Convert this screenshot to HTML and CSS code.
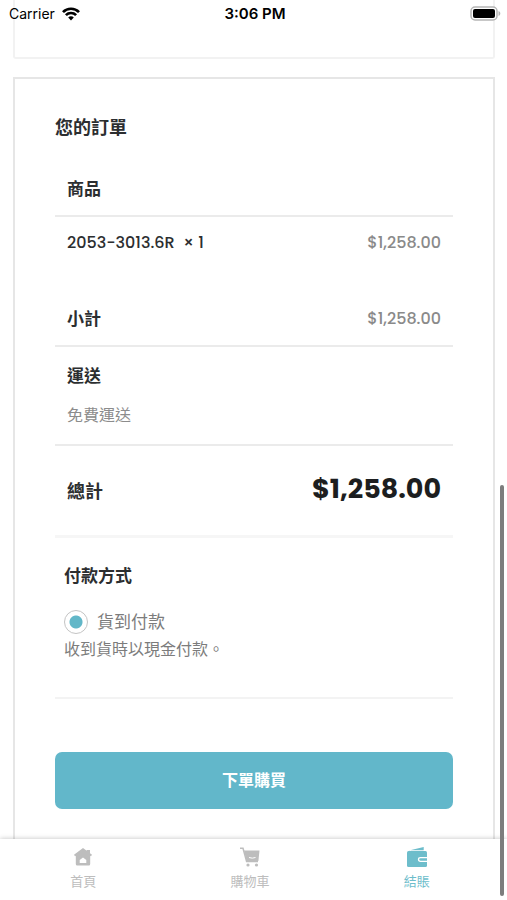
FILE: index.html
```html
<!DOCTYPE html>
<html lang="zh-Hant">
<head>
<meta charset="utf-8">
<meta name="viewport" content="width=device-width, initial-scale=1">
<title>結賬</title>
<link rel="stylesheet" href="styles.css">
</head>
<body>
<header class="status">
  <div class="carrier">
    <span>Carrier</span>
    <svg width="18" height="14" viewBox="0 0 18 14" aria-hidden="true">
      <g fill="none" stroke="#000" stroke-width="2.7">
        <path d="M1 5.1C5.4.6 12.6.6 17 5.1"/>
        <path d="M3.9 8.1c2.8-2.8 7.4-2.8 10.2 0"/>
      </g>
      <path d="M6.2 10.4c1.6-1.5 4-1.5 5.6 0L9 13.4z"/>
    </svg>
  </div>
  <span class="time">3:06 PM</span>
  <svg class="battery" width="31" height="15" viewBox="0 0 31 15" aria-hidden="true">
    <rect x="1" y="1" width="26" height="13" rx="4" fill="#fff" stroke="#b5b5b5" stroke-width="1.5"/>
    <rect x="3" y="3" width="22" height="9" rx="2"/>
    <path d="M28.5 5c2.4 1 2.4 4 0 5z" fill="#b5b5b5"/>
  </svg>
</header>

<section class="previous" aria-hidden="true"></section>

<main class="order">
  <h1 class="order-title">您的訂單</h1>
  <table class="items">
    <thead>
      <tr class="head"><th colspan="2" scope="col">商品</th></tr>
    </thead>
    <tbody>
      <tr class="item"><td class="name">2053-3013.6R &nbsp;× 1</td><td class="price">$1,258.00</td></tr>
      <tr class="subtotal"><th scope="row">小計</th><td class="price">$1,258.00</td></tr>
      <tr class="shipping"><td colspan="2"><div class="shipping-box"><strong>運送</strong><span>免費運送</span></div></td></tr>
      <tr class="total"><th scope="row">總計</th><td class="price">$1,258.00</td></tr>
    </tbody>
  </table>
  <form class="payment">
    <h2 class="payment-title">付款方式</h2>
    <div class="method">
      <input type="radio" id="cod" name="payment" checked>
      <label for="cod">貨到付款</label>
    </div>
    <p class="note">收到貨時以現金付款。</p>
  </form>
  <button class="buy" type="button">下單購買</button>
</main>

<nav class="tabs">
  <a class="tab" href="#home">
    <svg width="20" height="20" viewBox="0 0 20 20" aria-hidden="true">
      <path fill="currentColor" fill-rule="evenodd" d="M10 1l3.7 2.7V3H17v3.2l2 1.5-1 1.6-.8-.5V17q0 1.5-1.5 1.5H4.3q-1.5 0-1.5-1.5V8.8l-.8.5-1-1.6zM10 10.5L6.7 13v3h6.6v-3z"/>
    </svg>
    <span>首頁</span>
  </a>
  <a class="tab" href="#cart">
    <svg width="20" height="20" viewBox="0 0 20 20" aria-hidden="true">
      <path d="M0 1.2h3L6.6 14.5H18" fill="none" stroke="currentColor" stroke-width="1.5"/>
      <path fill="currentColor" d="M4 3.5h15.5L18.4 14H6.5z"/>
      <path d="M9 10.5q3.3 1.3 6.5 0" fill="none" stroke="#fff"/>
      <circle cx="8" cy="18" r="1.6" fill="currentColor"/>
      <circle cx="16.5" cy="18" r="1.6" fill="currentColor"/>
    </svg>
    <span>購物車</span>
  </a>
  <a class="tab active" href="#checkout" aria-current="page">
    <svg width="20" height="20" viewBox="0 0 20 20" aria-hidden="true">
      <path fill="currentColor" d="M2 3.6L16.7 0v3.2H2z"/>
      <rect y="4" width="20" height="16" rx="1.5" fill="currentColor"/>
      <path d="M20 10.7h-6.5q-2 0-2 1.8t2 1.8H20" fill="none" stroke="#fff" stroke-width="1.3"/>
    </svg>
    <span>結賬</span>
  </a>
</nav>
<div class="scroll-thumb" aria-hidden="true"></div>
</body>
</html>
```

FILE: styles.css
```css
* {
  box-sizing: border-box;
}

body {
  margin: 0;
  min-height: 100vh;
  display: flex;
  flex-direction: column;
  background: #fff;
  color: #2c2e30;
  font-family: Poppins, Inter, "Noto Sans CJK TC", sans-serif;
  font-size: 16px;
  line-height: 24px;
}

.status {
  position: absolute;
  top: 0;
  left: 0;
  right: 0;
  display: grid;
  grid-template-columns: 1fr auto 1fr;
  align-items: center;
  height: 27px;
  padding: 0 6px 0 9px;
  color: #000;
  font-family: Inter, sans-serif;
  font-size: 14px;
}

.carrier {
  display: flex;
  align-items: center;
  gap: 7px;
}

.time {
  font-size: 15px;
  font-weight: 600;
}

.battery {
  justify-self: end;
}

.previous {
  height: 59px;
  margin: 0 12px 18px 13px;
  border: 2px solid #f2f2f2;
  border-top: 0;
  border-radius: 0 0 3px 3px;
}

.order {
  flex: 1;
  margin: 0 12px 0 13px;
  padding: 33px 40px 30px;
  border: 2px solid #e6e6e6;
  border-bottom: 0;
}

.order-title {
  margin: 0 0 17px;
  font-size: 18px;
  font-weight: 600;
  line-height: 32px;
}

.items {
  width: 100%;
  border-collapse: separate;
  border-spacing: 0;
}

.items th,
.items td {
  padding: 2px 12px 0;
  border-bottom: 2px solid #ebebeb;
  text-align: left;
}

.items th {
  height: 56px;
  font-size: 17px;
  font-weight: 600;
}

.items .price {
  color: #8a8a8a;
  font-weight: 500;
  text-align: right;
}

.items .item td {
  height: 74px;
  padding-top: 1px;
  border: 0;
  line-height: 50px;
  vertical-align: top;
}

.item .name {
  font-weight: 500;
}

.items .shipping td {
  padding-top: 0;
}

.shipping-box {
  display: flex;
  flex-direction: column;
  gap: 16px;
  padding: 17px 0 16px;
  color: #8c8c8c;
}

.shipping-box strong {
  color: #2c2e30;
  font-size: 17px;
  font-weight: 600;
}

.items .total th,
.items .total td {
  height: 92px;
  border-bottom: 3px solid #f6f6f6;
}

.items .total th {
  font-size: 18px;
}

.items .total .price {
  padding-top: 0;
  padding-bottom: 4px;
  color: #1c1e20;
  font-size: 27px;
  font-weight: 700;
}

.payment {
  padding: 26px 9px 35px;
  border-bottom: 2px solid #f3f3f3;
  color: #7c7c7c;
}

.payment-title {
  margin: 0 0 22px;
  color: #2c2e30;
  font-size: 17px;
  font-weight: 600;
  line-height: 24px;
}

.method {
  display: flex;
  align-items: center;
  gap: 9px;
  font-size: 17px;
}

.method input {
  appearance: none;
  width: 24px;
  height: 24px;
  margin: 0;
  border: 1px solid #c4c4c4;
  border-radius: 50%;
  background: #fff;
}

.method input:checked {
  background: radial-gradient(circle, #62b7c8 6px, #fff 7px);
}

.note {
  margin: 4px 0 0;
}

.buy {
  display: block;
  width: 100%;
  height: 57px;
  margin-top: 53px;
  border: 0;
  border-radius: 7px;
  background: #62b7ca;
  color: #fff;
  font: inherit;
  font-weight: 600;
}

.tabs {
  position: relative;
  display: grid;
  grid-template-columns: repeat(3, 1fr);
  height: 61px;
  padding: 8px 7px 0 0;
  background: #fff;
  box-shadow: 0 0 5px rgba(0, 0, 0, 0.25);
}

.tab {
  display: flex;
  flex-direction: column;
  align-items: center;
  gap: 5px;
  color: #bdbdbd;
  font-size: 13px;
  line-height: 20px;
  text-decoration: none;
}

.tab.active {
  color: #6dbdcb;
}

.scroll-thumb {
  position: absolute;
  top: 485px;
  right: 3px;
  bottom: 4px;
  width: 4px;
  border-radius: 2px;
  background: #7d7d7d;
}
```
